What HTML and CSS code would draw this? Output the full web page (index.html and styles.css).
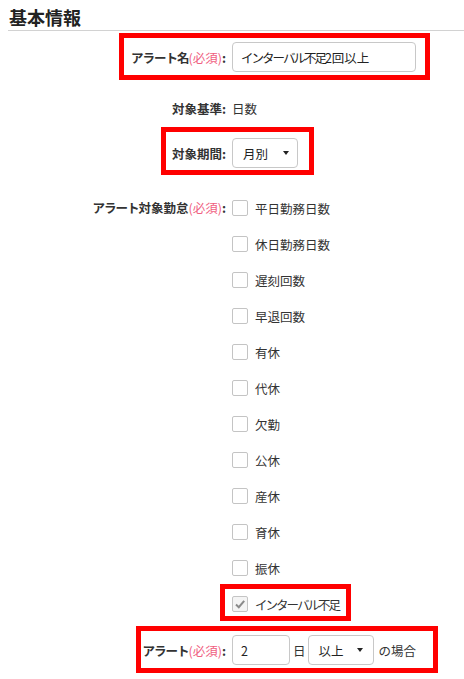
FILE: index.html
```html
<!DOCTYPE html>
<html lang="ja">
<head>
<meta charset="utf-8">
<link rel="stylesheet" href="styles.css">
</head>
<body>
<div class="page">
  <h2 class="title">基本情報</h2>

  <div class="row row-name">
    <div class="label"><span class="tight">アラート名</span><span class="req">(必須)</span>:</div>
    <div class="field"><div class="input input-name"><span class="tighter">インターバル不足</span><span>2回以上</span></div></div>
  </div>

  <div class="row row-base">
    <div class="label">対象基準:</div>
    <div class="field value">日数</div>
  </div>

  <div class="row row-period">
    <div class="label">対象期間:</div>
    <div class="field"><div class="select select-period"><span>月別</span><span class="caret"></span></div></div>
  </div>

  <div class="row row-items">
    <div class="label label-top"><span class="tight">アラート</span>対象勤怠<span class="req">(必須)</span>:</div>
    <ul class="checks">
      <li><span class="cb"></span>平日勤務日数</li>
      <li><span class="cb"></span>休日勤務日数</li>
      <li><span class="cb"></span>遅刻回数</li>
      <li><span class="cb"></span>早退回数</li>
      <li><span class="cb"></span>有休</li>
      <li><span class="cb"></span>代休</li>
      <li><span class="cb"></span>欠勤</li>
      <li><span class="cb"></span>公休</li>
      <li><span class="cb"></span>産休</li>
      <li><span class="cb"></span>育休</li>
      <li><span class="cb"></span>振休</li>
      <li><span class="cb cb-checked"><svg width="12" height="12" viewBox="0 0 12 12"><path d="M2 6.5 L4.8 9.2 L10.2 2.8" fill="none" stroke="#8a8a8a" stroke-width="2"/></svg></span><span class="tighter">インターバル不足</span></li>
    </ul>
  </div>

  <div class="row row-alert">
    <div class="label"><span class="tight">アラート</span><span class="req">(必須)</span>:</div>
    <div class="field inline">
      <div class="input input-num">2</div>
      <span class="unit">日</span>
      <div class="select select-cmp"><span>以上</span><span class="caret"></span></div>
      <span class="suffix">の場合</span>
    </div>
  </div>

  <div class="mark mark-1"></div>
  <div class="mark mark-2"></div>
  <div class="mark mark-3"></div>
  <div class="mark mark-4"></div>
</div>
</body>
</html>
```

FILE: styles.css
```css
html, body {
  margin: 0;
  padding: 0;
  background: #fff;
}
body {
  font-family: "Noto Sans CJK JP", "Noto Sans", sans-serif;
  font-size: 12.5px;
  color: #333;
}
.page {
  position: relative;
  width: 464px;
  height: 679px;
  padding: 6px 0 0 8px;
  box-sizing: border-box;
  overflow: hidden;
}
.title {
  margin: 0;
  font-size: 18px;
  line-height: 22px;
  font-weight: 700;
  color: #222;
  padding: 0 0 2px 1px;
  border-bottom: 1px solid #d2d2d2;
}
.tight { letter-spacing: -1px; }
.tighter { letter-spacing: -2px; }
.row {
  display: grid;
  grid-template-columns: 218px 1fr;
  column-gap: 6px;
  align-items: center;
}
.label {
  text-align: right;
  font-weight: 700;
  color: #333;
  white-space: nowrap;
}
.req {
  color: #f0607f;
  font-weight: 400;
}
.row-name { margin-top: 11px; height: 30px; }
.row-base { margin-top: 26px; height: 20px; }
.row-period { margin-top: 20px; height: 30px; }
.row-items { margin-top: 22px; align-items: start; }
.row-alert { margin-top: 13px; height: 30px; }
.label-top { line-height: 36px; }

.input, .select {
  box-sizing: border-box;
  height: 30px;
  border: 1px solid #c8c8c8;
  border-radius: 4px;
  background: #fff;
  display: flex;
  align-items: center;
  color: #222;
}
.input-name { width: 184px; padding-left: 8px; }
.select-period { width: 66px; padding: 0 8px 0 10px; justify-content: space-between; }
.caret {
  width: 0;
  height: 0;
  border-left: 3.5px solid transparent;
  border-right: 3.5px solid transparent;
  border-top: 4px solid #222;
}
.value { color: #333; }

.checks {
  list-style: none;
  margin: 0;
  padding: 0;
}
.checks li {
  height: 36px;
  display: flex;
  align-items: center;
  gap: 7px;
  color: #333;
}
.cb {
  box-sizing: border-box;
  width: 16px;
  height: 16px;
  border: 1px solid #c4c4c4;
  border-radius: 2px;
  background: #fff;
  display: flex;
  align-items: center;
  justify-content: center;
}
.cb-checked { background: #f4f4f4; }

.inline {
  display: flex;
  align-items: center;
}
.input-num { width: 58px; padding-left: 8px; }
.unit { margin: 0 2px 0 3px; }
.select-cmp { width: 66px; padding: 0 10px 0 10px; justify-content: space-between; }
.suffix { margin-left: 5px; }

.mark {
  position: absolute;
  box-sizing: border-box;
  border: 5px solid #ff0000;
}
.mark-1 { left: 119px; top: 33px; width: 311px; height: 47px; }
.mark-2 { left: 161px; top: 127px; width: 153px; height: 48px; }
.mark-3 { left: 220px; top: 584px; width: 131px; height: 37px; }
.mark-4 { left: 136px; top: 626px; width: 302px; height: 47px; }
```
